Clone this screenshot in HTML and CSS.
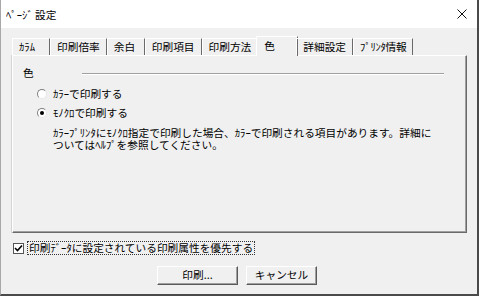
FILE: index.html
```html
<!DOCTYPE html>
<html lang="ja">
<head>
    <meta charset="UTF-8">
    <title>ページ設定</title>
    <link rel="stylesheet" href="styles.css">
</head>
<body>
    <div class="window">
        <div class="titlebar">
            <span class="title">ﾍﾟｰｼﾞ 設定</span>
            <svg class="close" width="10" height="10" viewBox="0 0 10 10">
                <path d="M0.5 0.5 L9.5 9.5 M9.5 0.5 L0.5 9.5" stroke="#111" stroke-width="1" fill="none"/>
            </svg>
        </div>
        <div class="content">
            <div class="tabs">
                <div class="tab">ｶﾗﾑ</div>
                <div class="tab">印刷倍率</div>
                <div class="tab">余白</div>
                <div class="tab">印刷項目</div>
                <div class="tab">印刷方法</div>
                <div class="tab active">色</div>
                <div class="tab">詳細設定</div>
                <div class="tab printer">ﾌﾟﾘﾝﾀ情報</div>
            </div>
            <div class="panel">
                <div class="group-head">
                    <span class="group-label">色</span>
                    <span class="group-line"></span>
                </div>
                <div class="options">
                    <div class="option"><span class="radio"></span>ｶﾗｰで印刷する</div>
                    <div class="option"><span class="radio checked"></span>ﾓﾉｸﾛで印刷する</div>
                    <p class="note">ｶﾗｰﾌﾟﾘﾝﾀにﾓﾉｸﾛ指定で印刷した場合、ｶﾗｰで印刷される項目があります。詳細に<br>ついてはﾍﾙﾌﾟを参照してください。</p>
                </div>
            </div>
            <div class="check-row">
                <span class="checkbox">
                    <svg width="9" height="9" viewBox="0 0 9 9">
                        <path d="M1 4 L3.5 6.5 L8 1.5" stroke="#000" stroke-width="1.6" fill="none"/>
                    </svg>
                </span>
                <span class="check-label">印刷ﾃﾞｰﾀに設定されている印刷属性を優先する</span>
            </div>
            <div class="buttons">
                <div class="btn print">印刷...</div>
                <div class="btn cancel">キャンセル</div>
            </div>
        </div>
    </div>
</body>
</html>
```

FILE: styles.css
```css
html, body {
    margin: 0;
    padding: 0;
}
body {
    font-family: "Noto Sans CJK JP", "Noto Sans", sans-serif;
    font-size: 10.7px;
    color: #000;
    background: #f0f0f0;
}
.window {
    width: 479px;
    height: 296px;
    box-sizing: border-box;
    border-left: 1px solid #a8a8a8;
    border-right: 2px solid #4a4a4a;
    border-bottom: 2px solid #4a4a4a;
    background: #f0f0f0;
    overflow: hidden;
}
.titlebar {
    height: 28px;
    background: #fff;
    display: flex;
    align-items: center;
    justify-content: space-between;
    padding: 0 10px 0 5px;
}
.title {
    line-height: 12px;
    margin-top: 1px;
}
.close {
    display: block;
}
.content {
    padding: 10px 0 0 11px;
}
.tabs {
    display: flex;
    height: 17px;
    position: relative;
    z-index: 1;
}
.tab {
    box-sizing: border-box;
    min-width: 38px;
    height: 17px;
    padding: 0 6px;
    line-height: 16px;
    border-top: 1px solid #fff;
    border-left: 1px solid #fff;
    border-right: 1px solid #6a6a6a;
    white-space: nowrap;
}
.tab.active {
    height: 20px;
    margin: -2px -2px 0 -2px;
    min-width: 42px;
    padding: 0 7px;
    line-height: 17px;
    background: #f0f0f0;
}
.tab.printer {
    width: 60px;
    padding-right: 0;
    letter-spacing: -0.3px;
}
.panel {
    box-sizing: border-box;
    width: 455px;
    height: 178px;
    border-top: 1px solid #fff;
    border-left: 1px solid #fff;
    border-right: 1px solid #6a6a6a;
    border-bottom: 1px solid #6a6a6a;
    box-shadow: inset -1px -1px 0 #a0a0a0, -1px 0 0 #d4d4d4;
    padding: 11px 0 0 10px;
}
.group-head {
    display: flex;
    align-items: center;
    height: 12px;
    width: 421px;
}
.group-label {
    width: 59px;
    line-height: 12px;
}
.group-line {
    flex: 1;
    height: 1px;
    background: #a0a0a0;
    border-bottom: 1px solid #fff;
    margin-top: 1px;
}
.options {
    padding: 5px 0 0 14px;
}
.option {
    display: flex;
    align-items: center;
    height: 19px;
}
.radio {
    box-sizing: border-box;
    width: 10px;
    height: 10px;
    border-radius: 50%;
    border: 1px solid;
    border-color: #808080 #e8e8e8 #e8e8e8 #808080;
    background: #fff;
    margin-right: 6px;
    display: flex;
    align-items: center;
    justify-content: center;
}
.radio.checked::after {
    content: "";
    width: 4px;
    height: 4px;
    border-radius: 50%;
    background: #000;
}
.note {
    margin: 5px 0 0 16px;
    line-height: 11.5px;
    white-space: nowrap;
}
.check-row {
    display: flex;
    align-items: center;
    margin-top: 8px;
    height: 14px;
}
.checkbox {
    box-sizing: border-box;
    width: 11px;
    height: 11px;
    border: 1px solid #555;
    background: #fff;
    display: flex;
    align-items: center;
    justify-content: center;
    margin: 0 4px 0 1px;
}
.check-label {
    line-height: 12px;
    padding: 0 1px;
    outline: 1px dotted #333;
}
.buttons {
    display: flex;
    gap: 8px;
    padding: 11px 0 0 145px;
}
.btn {
    box-sizing: border-box;
    height: 19px;
    line-height: 16px;
    text-align: center;
    background: #f0f0f0;
    border: 1px solid;
    border-color: #fff #5a5a5a #5a5a5a #fff;
    box-shadow: inset -1px -1px 0 #a0a0a0;
}
.btn.print {
    width: 81px;
}
.btn.cancel {
    width: 71px;
}
```
